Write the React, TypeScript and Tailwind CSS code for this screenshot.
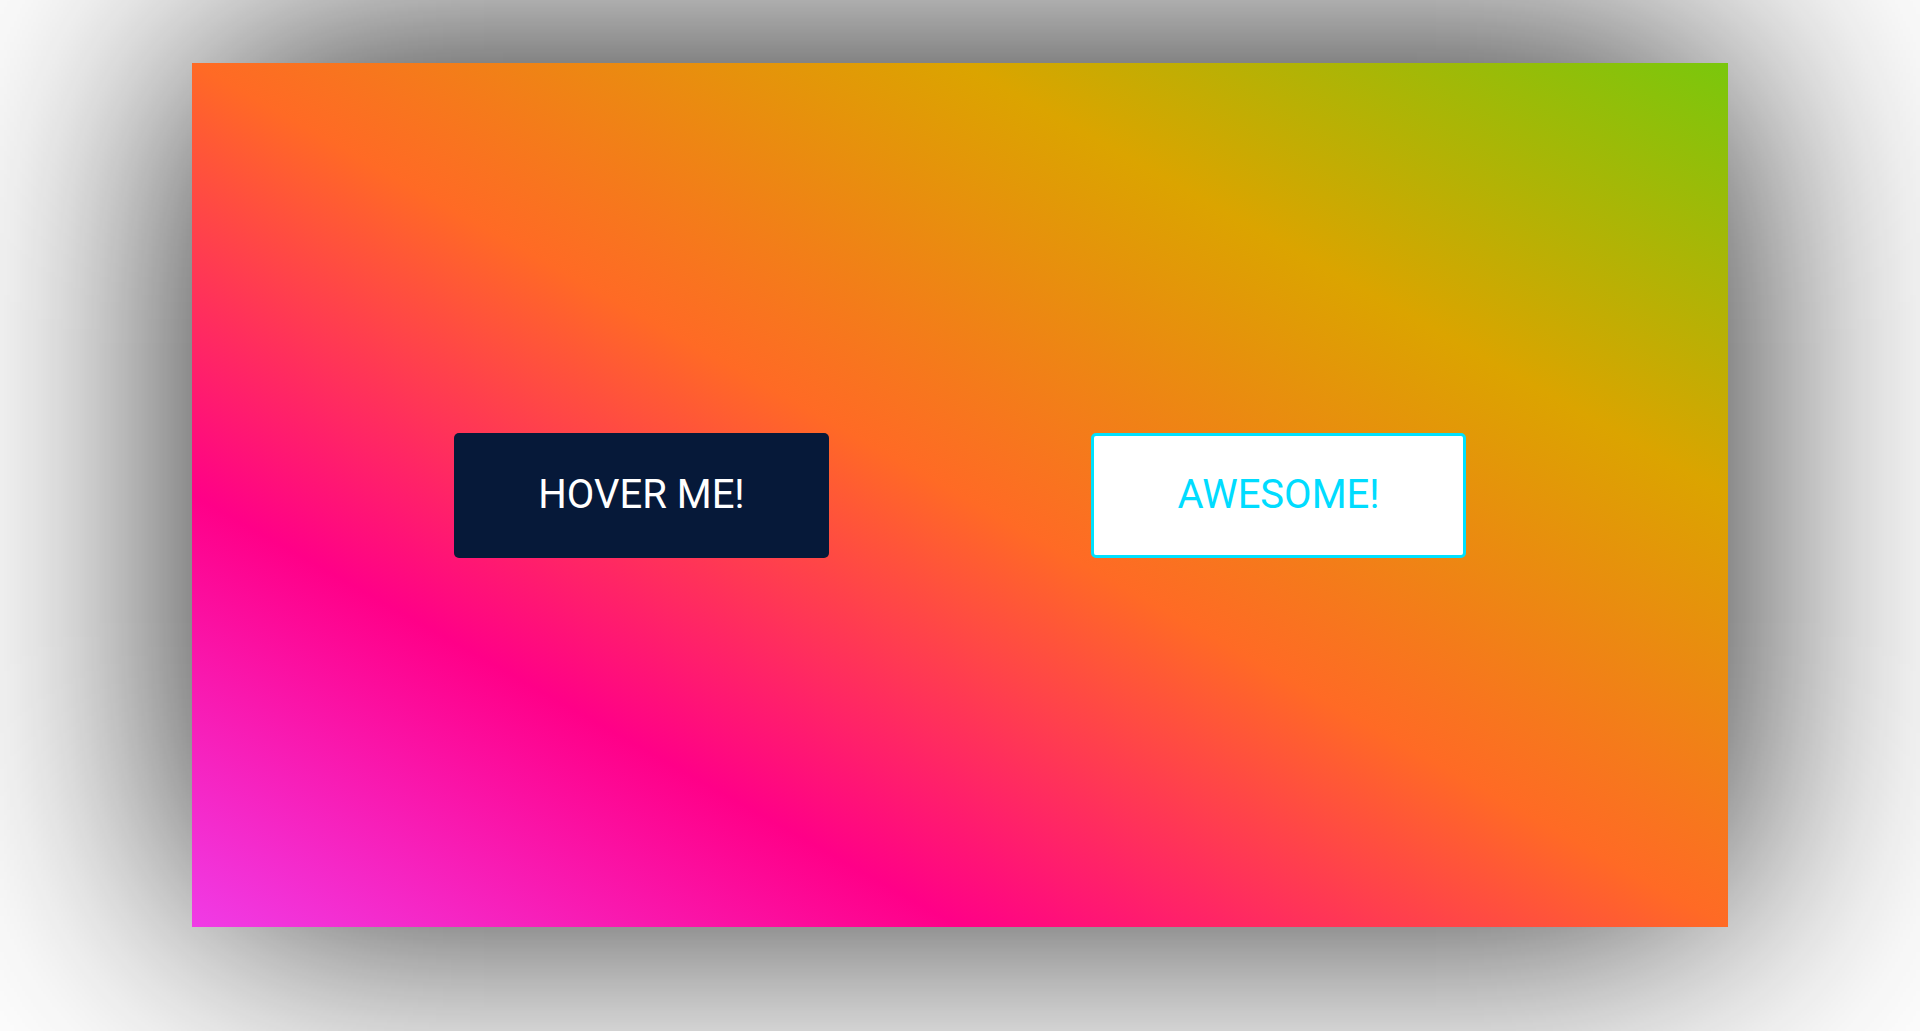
export default function App() {
  return (
    <main className="h-[1031px] w-full overflow-hidden bg-white pt-[63px] font-['Roboto',sans-serif]">
      <section className="mx-auto flex h-[864px] w-[1536px] items-center justify-center gap-[262px] bg-[linear-gradient(to_top_right,#f03be6_0%,#ff0088_25%,#ff6a25_50%,#dba400_75%,#7ac70c_100%)] shadow-[0_-12px_276px_rgba(0,0,0,0.9)]">
        <button className="flex h-[125px] w-[375px] items-center justify-center rounded-[5px] bg-[#061939] text-[40px] leading-none text-white">
          HOVER ME!
        </button>
        <button className="flex h-[125px] w-[375px] items-center justify-center rounded-[5px] border-[3px] border-[#00e1ff] bg-white text-[40px] leading-none text-[#00dcff]">
          AWESOME!
        </button>
      </section>
    </main>
  )
}
